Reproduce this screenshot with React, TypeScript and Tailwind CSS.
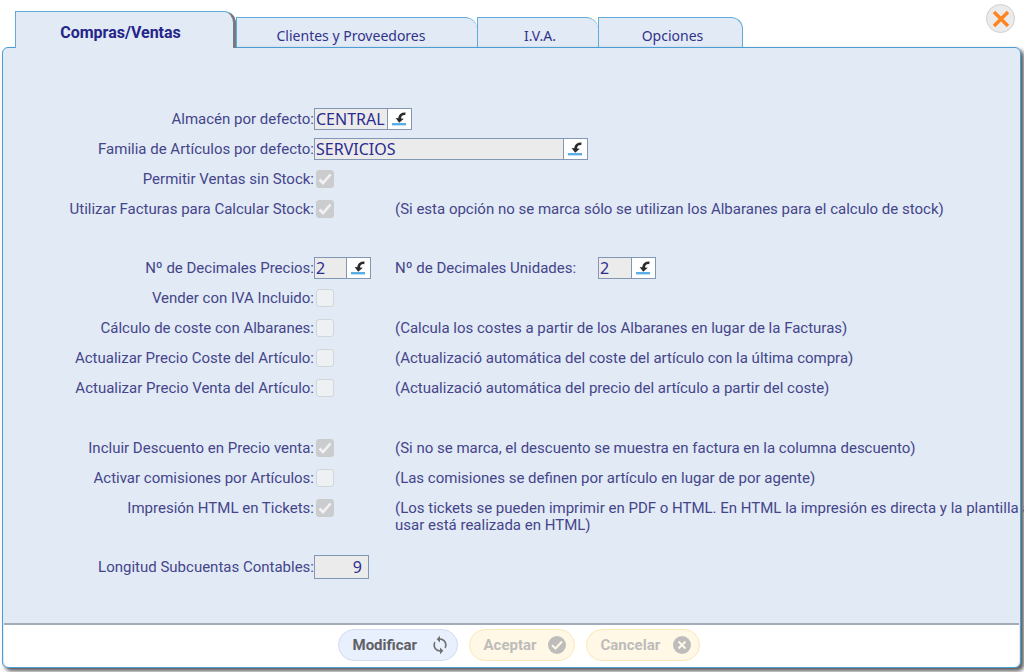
import { useState, type ReactNode } from 'react';

const tabs = [
    { name: 'Clientes y Proveedores', style: 'w-[241px] pr-3' },
    { name: 'I.V.A.', style: 'w-[121px] pl-1' },
    { name: 'Opciones', style: 'w-[145px] border-r pl-1' },
];

function PickIcon() {
    return (
        <svg viewBox="0 0 16 16" className="-ml-0.5 size-4">
            <rect x="1" y="12" width="14" height="2.4" fill="#5aaee6" />
            <path d="M14.6 1.4L14.2 4.2Q10.6 3.6 10 7.4L12.8 7.8L8.2 11.8L4.6 7L7.2 7.3Q7.8 1.2 14.6 1.4Z" fill="#2b2b2b" />
        </svg>
    );
}

function Row({ id, label, children, note }: { id: string; label: string; children: ReactNode; note?: ReactNode }) {
    return (
        <div className="flex h-[30px] items-start">
            <label htmlFor={id} className="w-[311px] shrink-0 whitespace-nowrap pt-[7px] text-right">
                {label}
            </label>
            <div className="flex h-[30px] w-[81px] shrink-0 items-center">{children}</div>
            {note && <div className="whitespace-nowrap pt-[7px]">{note}</div>}
        </div>
    );
}

function PickField({ id, value, width }: { id: string; value: string; width: string }) {
    return (
        <div className="flex h-[22px] shrink-0 border border-[#8297b3] bg-[#ebebeb]">
            <input id={id} value={value} readOnly className={`${width} pl-px font-['Noto_Sans',sans-serif] text-base leading-5 text-[#2c2c90] outline-none`} />
            <button type="button" aria-label="Seleccionar" className="flex w-6 items-center justify-center border-l border-[#8297b3] bg-white">
                <PickIcon />
            </button>
        </div>
    );
}

function Check({ id, checked = false }: { id: string; checked?: boolean }) {
    return (
        <span className="ml-0.5 grid">
            <input
                id={id}
                type="checkbox"
                defaultChecked={checked}
                disabled
                className="col-start-1 row-start-1 size-[18px] appearance-none rounded-[3px] border border-[#d3d6d9] bg-[#eef1f4] checked:border-[#cbcccd] checked:bg-[#cbcccd]"
            />
            {checked && (
                <svg viewBox="0 0 18 18" className="pointer-events-none col-start-1 row-start-1 size-[18px]">
                    <path d="M3.5 9.5L7 13L14.5 4.5" fill="none" stroke="#f1f2f3" strokeWidth="2.6" />
                </svg>
            )}
        </span>
    );
}

export default function App() {
    const [active] = useState('Compras/Ventas');

    return (
        <div className="flex min-h-screen flex-col overflow-hidden bg-white pb-1 pl-0.5 pr-[3px] font-[Roboto,sans-serif] text-[15px] leading-[17px] text-[#45458a]">
            {/* Tabs */}
            <header className="flex h-[47px] items-start justify-between pl-[13px] pr-1.5">
                <nav className="flex h-[47px] items-end text-[#32328c]">
                    <button type="button" className="z-10 -mb-px h-[37px] w-[221px] rounded-tr-[12px] border-l border-r-[3px] border-t border-l-[#62abd8] border-r-[#757b80] border-t-[#62abd8] bg-[#e1eaf5] pb-px pr-2 pt-1.5 text-base font-bold text-[#25258a]">
                        {active}
                    </button>
                    {tabs.map((tab) => (
                        <button
                            key={tab.name}
                            type="button"
                            className={`${tab.style} h-[30px] rounded-tr-[12px] border-l border-t border-[#62abd8] bg-[#e1eaf5] pt-1.5 font-['Noto_Sans',sans-serif] text-sm`}
                        >
                            {tab.name}
                        </button>
                    ))}
                </nav>
                <button type="button" aria-label="Cerrar" className="mt-1 flex size-[29px] items-center justify-center rounded-full border border-[#cfcfcf] bg-[#ebebeb]">
                    <svg viewBox="0 0 18 18" className="size-[18px]">
                        <path d="M2 2L16 16M16 2L2 16" stroke="#ff8420" strokeWidth="3.4" />
                    </svg>
                </button>
            </header>

            <main className="flex flex-1 flex-col rounded-md border border-[#4b9ed3] bg-[#e1eaf5] shadow-[3px_3px_4px_#555]">
                {/* Settings */}
                <form className="flex-1 pb-10 pt-14">
                    <Row id="almacen" label="Almacén por defecto:">
                        <PickField id="almacen" value="CENTRAL" width="w-[72px]" />
                    </Row>
                    <Row id="familia" label="Familia de Artículos por defecto:">
                        <PickField id="familia" value="SERVICIOS" width="w-[248px]" />
                    </Row>
                    <Row id="sinStock" label="Permitir Ventas sin Stock:">
                        <Check id="sinStock" checked />
                    </Row>
                    <Row id="facturas" label="Utilizar Facturas para Calcular Stock:" note="(Si esta opción no se marca sólo se utilizan los Albaranes para el calculo de stock)">
                        <Check id="facturas" checked />
                    </Row>

                    <div className="flex pt-[29px]">
                        <Row id="decPrecios" label="Nº de Decimales Precios:">
                            <PickField id="decPrecios" value="2" width="w-[31px]" />
                        </Row>
                        <label htmlFor="decUnidades" className="w-[203px] pt-[7px]">
                            Nº de Decimales Unidades:
                        </label>
                        <div className="flex h-[30px] items-center">
                            <PickField id="decUnidades" value="2" width="w-8" />
                        </div>
                    </div>
                    <Row id="ivaIncluido" label="Vender con IVA Incluido:">
                        <Check id="ivaIncluido" />
                    </Row>
                    <Row id="costeAlbaranes" label="Cálculo de coste con Albaranes:" note="(Calcula los costes a partir de los Albaranes en lugar de la Facturas)">
                        <Check id="costeAlbaranes" />
                    </Row>
                    <Row id="precioCoste" label="Actualizar Precio Coste del Artículo:" note="(Actualizació automática del coste del artículo con la última compra)">
                        <Check id="precioCoste" />
                    </Row>
                    <Row id="precioVenta" label="Actualizar Precio Venta del Artículo:" note="(Actualizació automática del precio del artículo a partir del coste)">
                        <Check id="precioVenta" />
                    </Row>

                    <div className="pb-[29px] pt-[30px]">
                        <Row id="descuento" label="Incluir Descuento en Precio venta:" note="(Si no se marca, el descuento se muestra en factura en la columna descuento)">
                            <Check id="descuento" checked />
                        </Row>
                        <Row id="comisiones" label="Activar comisiones por Artículos:" note="(Las comisiones se definen por artículo en lugar de por agente)">
                            <Check id="comisiones" />
                        </Row>
                        <Row
                            id="tickets"
                            label="Impresión HTML en Tickets:"
                            note={
                                <>
                                    (Los tickets se pueden imprimir en PDF o HTML. En HTML la impresión es directa y la plantilla a
                                    <br />
                                    usar está realizada en HTML)
                                </>
                            }
                        >
                            <Check id="tickets" checked />
                        </Row>
                    </div>
                    <Row id="longitud" label="Longitud Subcuentas Contables:">
                        <input id="longitud" value="9" readOnly className="h-6 w-[55px] border border-[#8297b3] bg-[#ebebeb] pr-1.5 text-right font-['Noto_Sans',sans-serif] text-base leading-5 text-[#2c2c90] outline-none" />
                    </Row>
                </form>

                {/* Actions */}
                <footer className="mx-px flex h-11 items-center justify-center gap-[11px] rounded-b-md border-t-2 border-[#a3adba] bg-white pb-0.5 pl-3.5 font-bold">
                    <button type="button" className="flex h-8 w-[120px] items-center justify-between rounded-full border border-[#d3dcf0] bg-[#e8effd] pl-3.5 pr-[7px] text-[#606066]">
                        Modificar
                        <svg viewBox="0 0 24 24" className="size-5" fill="#707070">
                            <path d="M12 4V1L8 5l4 4V6c3.31 0 6 2.69 6 6 0 1.01-.25 1.97-.7 2.8l1.46 1.46A7.93 7.93 0 0 0 20 12c0-4.42-3.58-8-8-8zm0 14c-3.31 0-6-2.69-6-6 0-1.01.25-1.97.7-2.8L5.24 7.74A7.93 7.93 0 0 0 4 12c0 4.42 3.58 8 8 8v3l4-4-4-4v3z" />
                        </svg>
                    </button>
                    <button type="button" disabled className="flex h-8 w-[106px] items-center justify-between rounded-full border border-[#fce8b8] bg-[#fff8e7] pl-3.5 pr-[7px] text-[#bdbcb9]">
                        Aceptar
                        <svg viewBox="0 0 20 20" className="size-5">
                            <circle cx="10" cy="10" r="9" fill="#bebdbb" />
                            <path d="M5 10.2L8.5 13.5L15 6.5" fill="none" stroke="#fff8e7" strokeWidth="2" />
                        </svg>
                    </button>
                    <button type="button" disabled className="flex h-8 w-[114px] items-center justify-between rounded-full border border-[#fce8b8] bg-[#fff8e7] pl-3.5 pr-[7px] text-[#bdbcb9]">
                        Cancelar
                        <svg viewBox="0 0 20 20" className="size-5">
                            <circle cx="10" cy="10" r="9" fill="#bebdbb" />
                            <path d="M6.5 6.5L13.5 13.5M13.5 6.5L6.5 13.5" stroke="#fff8e7" strokeWidth="2" />
                        </svg>
                    </button>
                </footer>
            </main>
        </div>
    );
}
